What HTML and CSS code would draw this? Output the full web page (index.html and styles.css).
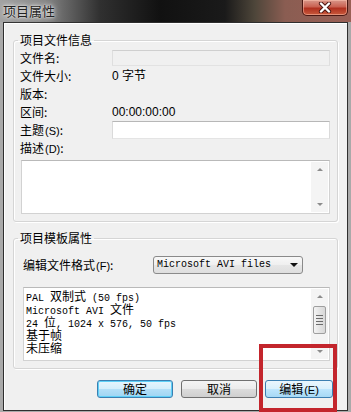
FILE: index.html
```html
<!DOCTYPE html>
<html lang="zh-CN">
<head>
  <meta charset="UTF-8" />
  <title>项目属性</title>
  <link rel="stylesheet" href="styles.css">
</head>
<body>

  <div class="titlebar">
    <div class="title">项目属性</div>
    <div class="close">
      <svg width="14" height="11" viewBox="0 0 14 11">
        <path d="M3 1.5 L11 9.5 M11 1.5 L3 9.5" stroke="#4a1410" stroke-width="4.2" stroke-linecap="round"/>
        <path d="M3 1.5 L11 9.5 M11 1.5 L3 9.5" stroke="#fff" stroke-width="2.4" stroke-linecap="round"/>
      </svg>
    </div>
  </div>

  <div class="client">
    <fieldset class="group">
      <legend>项目文件信息</legend>
      <div class="row"><span>文件名:</span><div class="field field-off"></div></div>
      <div class="row"><span>文件大小:</span><span class="value">0 字节</span></div>
      <div class="row"><span>版本:</span><span></span></div>
      <div class="row"><span>区间:</span><span class="value">00:00:00:00</span></div>
      <div class="row"><span>主题<span class="key">(S)</span>:</span><div class="field field-on"></div></div>
      <div class="row"><span>描述<span class="key">(D)</span>:</span><span></span></div>
      <div class="memo">
        <div class="memo-text"></div>
        <div class="scroll">
          <span class="arrow arrow-up"></span>
          <span class="track"></span>
          <span class="arrow arrow-down"></span>
        </div>
      </div>
    </fieldset>

    <fieldset class="group group-template">
      <legend>项目模板属性</legend>
      <div class="row row-format">
        <span>编辑文件格式<span class="key">(F)</span>:</span>
        <div class="select">
          <span>Microsoft AVI files</span>
          <span class="select-arrow"></span>
        </div>
      </div>
      <div class="listbox">
        <div class="list-text">
          <div>PAL <span class="cj">双制式</span> (50 fps)</div>
          <div>Microsoft AVI <span class="cj">文件</span></div>
          <div>24 <span class="cj">位</span>, 1024 x 576, 50 fps</div>
          <div><span class="cj">基于帧</span></div>
          <div><span class="cj">未压缩</span></div>
        </div>
        <div class="scroll">
          <span class="arrow arrow-up"></span>
          <span class="track"><span class="thumb"><i></i><i></i><i></i><i></i></span></span>
          <span class="arrow arrow-down"></span>
        </div>
      </div>
    </fieldset>

    <div class="buttons">
      <button class="btn btn-default">确定</button>
      <button class="btn">取消</button>
      <button class="btn btn-hot">编辑<span class="key">(E)</span></button>
    </div>
  </div>

  <!-- highlight drawn on top of the screenshot -->
  <div class="mark"></div>

</body>
</html>
```

FILE: styles.css
```css
* {
  box-sizing: border-box;
}
body {
  margin: 0;
  width: 351px;
  height: 412px;
  overflow: hidden;
  position: relative;
  background: #a9a9a9;
  font-family: "Noto Sans CJK SC", "Liberation Sans", sans-serif;
  font-size: 12px;
  color: #000;
}

/* title bar */
.titlebar {
  height: 22px;
  display: flex;
  align-items: flex-start;
  background: linear-gradient(90deg, #a2a2a2 0, #858585 45px, #303030 100px, #111 160px, #1a1a1a 225px, #4e463a 255px, #8a5d52 285px, #9a5f55 351px);
}
.title {
  padding: 3px 0 0 3px;
  font-size: 13px;
  line-height: 16px;
  color: #222;
  text-shadow: 0 0 4px #e8e8e8, 0 0 8px #d0d0d0, 0 0 2px #fff;
}
.close {
  margin-left: auto;
  margin-right: 3px;
  width: 46px;
  height: 16px;
  border: 1px solid #4a1712;
  border-top: none;
  border-radius: 0 0 5px 5px;
  background: linear-gradient(#d9978a 0, #c96151 45%, #b0301f 55%, #c85a3c 100%);
  box-shadow: inset 0 0 0 1px rgba(255, 200, 180, 0.5);
  display: flex;
  justify-content: center;
  align-items: center;
}

/* window client area */
.client {
  margin-left: 3px;
  width: 345px;
  height: 389px;
  border: 1px solid #2e2e2e;
  background: #f0f0f0;
  box-shadow: inset 1px 1px 0 #fff;
  padding-top: 10px;
}
.group {
  margin: 0 0 0 9px;
  width: 325px;
  padding: 2px 7px 7px 6px;
  border: 1px solid #d5d5d5;
  border-radius: 3px;
  box-shadow: inset 1px 1px 0 #fff, 1px 1px 0 #fff;
  min-inline-size: 0;
}
.group legend {
  margin-left: -2px;
  padding: 0 2px;
  line-height: 14px;
}
.group-template {
  margin-top: 9px;
}
.row {
  display: grid;
  grid-template-columns: 92px 1fr;
  align-items: center;
  height: 18px;
  line-height: 14px;
}
.key {
  font-family: "Liberation Sans", sans-serif;
  font-size: 11px;
  margin-left: 1px;
}
.value {
  font-family: "Liberation Sans", "Noto Sans CJK SC", sans-serif;
}
.field {
  height: 16px;
  border: 1px solid #d4d4d4;
}
.field-off {
  background: #f0f0f0;
  border-color: #cfcfcf #dedede #e2e2e2 #dedede;
}
.field-on {
  height: 18px;
  background: #fff;
  border-color: #b7b7b7 #dadada #e4e4e4 #dadada;
}

/* multi-line boxes */
.memo, .listbox {
  display: flex;
  background: #fff;
  border: 1px solid #d2d2d2;
  border-top-color: #b9b9b9;
}
.memo {
  margin: 3px 0 0 1px;
  height: 54px;
}
.memo-text, .list-text {
  flex: 1;
}
.scroll {
  width: 17px;
  margin: 1px 1px 1px 0;
  display: flex;
  flex-direction: column;
  align-items: center;
  background: #f4f4f4;
}
.arrow {
  height: 15px;
  width: 15px;
  display: flex;
  justify-content: center;
  align-items: center;
}
.arrow::before {
  content: "";
  border-left: 3px solid transparent;
  border-right: 3px solid transparent;
}
.arrow-up::before {
  border-bottom: 3px solid #8c8c8c;
}
.arrow-down::before {
  border-top: 3px solid #8c8c8c;
}
.track {
  flex: 1;
  width: 15px;
  display: flex;
  flex-direction: column;
}

.row-format {
  grid-template-columns: 130px 1fr;
  margin-top: 9px;
  padding-left: 3px;
}
.select {
  width: 150px;
  height: 18px;
  border: 1px solid #8a8a8a;
  border-radius: 3px;
  background: linear-gradient(#f8f8f8 0, #efefef 50%, #e6e6e6 50%, #dedede 100%);
  display: flex;
  align-items: center;
  padding: 0 0 0 3px;
  font-family: "Liberation Mono", monospace;
  font-size: 10px;
}
.select-arrow {
  margin-left: auto;
  margin-right: 4px;
  border-left: 4px solid transparent;
  border-right: 4px solid transparent;
  border-top: 4px solid #111;
}
.listbox {
  margin: 13px 0 0 3px;
  width: 307px;
  height: 74px;
}
.list-text {
  padding: 1px 0 0 2px;
  font-family: "Liberation Mono", monospace;
  font-size: 10px;
  line-height: 13px;
}
.list-text div {
  height: 13px;
  white-space: nowrap;
}
.cj {
  font-family: "Noto Sans CJK SC", sans-serif;
  font-size: 12px;
  line-height: 13px;
}
.thumb {
  margin: 2px 1px 0 1px;
  height: 28px;
  border: 1px solid #9e9e9e;
  border-radius: 2px;
  background: linear-gradient(90deg, #f4f4f4, #e4e4e4 50%, #d8d8d8);
  display: flex;
  flex-direction: column;
  justify-content: center;
  align-items: center;
  gap: 2px;
}
.thumb i {
  display: block;
  width: 7px;
  height: 1px;
  background: #6b6b6b;
}

/* dialog buttons */
.buttons {
  display: flex;
  gap: 8px;
  margin-top: 11px;
  padding-left: 93px;
}
.btn {
  width: 76px;
  height: 18px;
  padding: 0;
  border: 1px solid #707070;
  border-radius: 3px;
  background: linear-gradient(#f4f4f4 0, #ebebeb 50%, #dcdcdc 50%, #cfcfcf 100%);
  font-family: "Noto Sans CJK SC", sans-serif;
  font-size: 12px;
  line-height: 14px;
  color: #000;
}
.btn-default {
  border-color: #3c7fb1;
  background: linear-gradient(#e6f5fd 0, #d4eefb 50%, #b4e0f8 50%, #9fd5f3 100%);
  box-shadow: inset 0 0 0 1px #5ed0f7;
}
.btn-hot {
  width: 68px;
  border-color: #3c7fb1;
  background: linear-gradient(#eaf6fd 0, #d9f0fc 50%, #bee6fd 50%, #a7d9f5 100%);
}

.mark {
  position: absolute;
  left: 259px;
  top: 344px;
  width: 78px;
  height: 68px;
  border: 4px solid #c3252c;
}
```
